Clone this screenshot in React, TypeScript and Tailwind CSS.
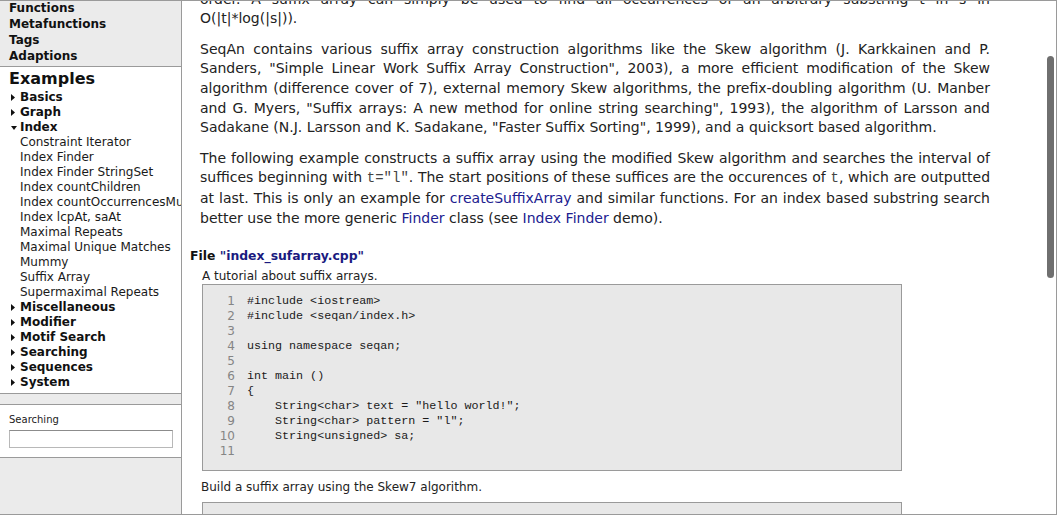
import type { ReactNode } from "react";

const FONT = "font-['DejaVu_Sans',Verdana,sans-serif]";
const MONO = "font-['Liberation_Mono','Courier_New',monospace]";

type Entry = { label: string; open?: boolean; children?: string[] };

const tree: Entry[] = [
  { label: "Basics" },
  { label: "Graph" },
  {
    label: "Index",
    open: true,
    children: [
      "Constraint Iterator",
      "Index Finder",
      "Index Finder StringSet",
      "Index countChildren",
      "Index countOccurrencesMultiple",
      "Index lcpAt, saAt",
      "Maximal Repeats",
      "Maximal Unique Matches",
      "Mummy",
      "Suffix Array",
      "Supermaximal Repeats",
    ],
  },
  { label: "Miscellaneous" },
  { label: "Modifier" },
  { label: "Motif Search" },
  { label: "Searching" },
  { label: "Sequences" },
  { label: "System" },
];

const code1 = [
  "#include <iostream>",
  "#include <seqan/index.h>",
  "",
  "using namespace seqan;",
  "",
  "int main ()",
  "{",
  '    String<char> text = "hello world!";',
  '    String<char> pattern = "l";',
  "    String<unsigned> sa;",
  "",
];

const code2 = ["    resize(sa, length(text));", "    createSuffixArray(sa, text, Skew7());"];

function Caret({ open }: { open?: boolean }) {
  return (
    <span className="inline-flex w-[11px] shrink-0 items-center pl-[2px]">
      {open ? (
        <svg width="6" height="4" viewBox="0 0 6 4">
          <path d="M0 0H6L3 4Z" fill="#111" />
        </svg>
      ) : (
        <svg width="4" height="7" viewBox="0 0 4 7">
          <path d="M0 0L4 3.5L0 7Z" fill="#111" />
        </svg>
      )}
    </span>
  );
}

function Sidebar() {
  return (
    <aside className="flex w-[182px] shrink-0 flex-col overflow-hidden whitespace-nowrap border-r border-[#9a9a9a] bg-[#ebebeb] text-[#111]">
      <div className="h-[66px] shrink-0 border-b border-[#9a9a9a] pl-[9px] text-[12px] font-bold leading-[16px]">
        <div className="-mt-[1px]">
          <div>Functions</div>
          <div>Metafunctions</div>
          <div>Tags</div>
          <div>Adaptions</div>
        </div>
      </div>
      <div className="h-[327px] shrink-0 border-b border-[#9a9a9a] bg-white pl-[9px] pt-[1px]">
        <div className="text-[16px] font-bold leading-[22px]">Examples</div>
        <ul className="text-[12px] leading-[15px]">
          {tree.map((e) => (
            <li key={e.label}>
              <div className="flex items-center font-bold">
                <Caret open={e.open} />
                {e.label}
              </div>
              {e.children && (
                <ul className="pl-[11px] text-[#1a1a1a]">
                  {e.children.map((c) => (
                    <li key={c}>{c}</li>
                  ))}
                </ul>
              )}
            </li>
          ))}
        </ul>
      </div>
      <div className="h-[10px] shrink-0" />
      <div className="shrink-0 border-y border-[#9a9a9a] bg-white pb-[9px] pl-[9px] pt-[8px]">
        <div className="text-[10px] leading-[13px] text-[#222]">Searching</div>
        <input
          className="mt-[4px] block h-[18px] w-[164px] border border-[#b8b8b8] border-t-[#8c8c8c] bg-white outline-none"
          aria-label="Searching"
        />
      </div>
      <div className="flex-1" />
    </aside>
  );
}

/* each line is set on its own so the breaks match; all but the last are justified */
function Para({ lines, className = "" }: { lines: ReactNode[]; className?: string }) {
  return (
    <div className={`w-[790px] ${className}`}>
      {lines.map((l, i) => (
        <div
          key={i}
          className={
            i < lines.length - 1 ? "whitespace-nowrap text-justify [text-align-last:justify]" : "whitespace-nowrap"
          }
        >
          {l}
        </div>
      ))}
    </div>
  );
}

const Tt = ({ children }: { children: ReactNode }) => (
  <code className={`${MONO} text-[14px] text-[#444]`}>{children}</code>
);
const A = ({ children }: { children: ReactNode }) => <a className="text-[#20208f]">{children}</a>;

function CodeBox({ lines, start, className = "" }: { lines: string[]; start: number; className?: string }) {
  return (
    <div className={`ml-[20px] w-[700px] border border-[#9a9a9a] bg-[#e8e8e8] pb-[11px] pt-[9px] ${className}`}>
      <div className="flex leading-[15px]">
        <div className="w-[32px] shrink-0 text-right text-[12px] text-[#858585]">
          {lines.map((_, i) => (
            <div key={i}>{start + i}</div>
          ))}
        </div>
        <pre className={`ml-[12px] ${MONO} text-[11.7px] leading-[15px] text-[#1a1a1a]`}>
          {lines.map((l, i) => (
            <div key={i} className="h-[15px]">
              {l}
            </div>
          ))}
        </pre>
      </div>
    </div>
  );
}

function Content() {
  return (
    <main className="relative flex-1 overflow-hidden">
      <div className="-mt-[11.4px] text-[#222]">
        <div className="pl-[18px] text-[14px] leading-[19.6px]">
          <Para
            lines={[
              "order. A suffix array can simply be used to find all occurrences of an arbitrary substring t in s in",
              "O(|t|*log(|s|)).",
            ]}
          />
          <Para
            className="mt-[11px]"
            lines={[
              "SeqAn contains various suffix array construction algorithms like the Skew algorithm (J. Karkkainen and P.",
              'Sanders, "Simple Linear Work Suffix Array Construction", 2003), a more efficient modification of the Skew',
              "algorithm (difference cover of 7), external memory Skew algorithms, the prefix-doubling algorithm (U. Manber",
              'and G. Myers, "Suffix arrays: A new method for online string searching", 1993), the algorithm of Larsson and',
              'Sadakane (N.J. Larsson and K. Sadakane, "Faster Suffix Sorting", 1999), and a quicksort based algorithm.',
            ]}
          />
          <Para
            className="mt-[11px]"
            lines={[
              "The following example constructs a suffix array using the modified Skew algorithm and searches the interval of",
              <>
                suffices beginning with <Tt>t="l"</Tt>. The start positions of these suffices are the occurences of{" "}
                <Tt>t</Tt>, which are outputted
              </>,
              <>
                at last. This is only an example for <A>createSuffixArray</A> and similar functions. For an index based
                substring search
              </>,
              <>
                better use the more generic <A>Finder</A> class (see <A>Index Finder</A> demo).
              </>,
            ]}
          />
        </div>
        <h3 className="mt-[20px] pl-[8px] text-[12.4px] font-bold leading-[16px] text-[#111]">
          File <a className="text-[#1a1a80]">"index_sufarray.cpp"</a>
        </h3>
        <p className="mt-[4px] pl-[20px] text-[12px] leading-[16px]">A tutorial about suffix arrays.</p>
        <CodeBox lines={code1} start={1} />
        <p className="mt-[8px] pl-[19px] text-[12px] leading-[16px]">Build a suffix array using the Skew7 algorithm.</p>
        <CodeBox lines={code2} start={12} className="mt-[7px]" />
      </div>
      {/* overlay scrollbar */}
      <div className="absolute right-[2px] top-[55px] h-[222px] w-[7px] rounded-full bg-[#6f6f6f]" />
    </main>
  );
}

export default function App() {
  return (
    <div
      className={`flex h-[515px] w-[1057px] overflow-hidden border-y border-r border-[#9a9a9a] bg-white ${FONT}`}
    >
      <Sidebar />
      <Content />
    </div>
  );
}
